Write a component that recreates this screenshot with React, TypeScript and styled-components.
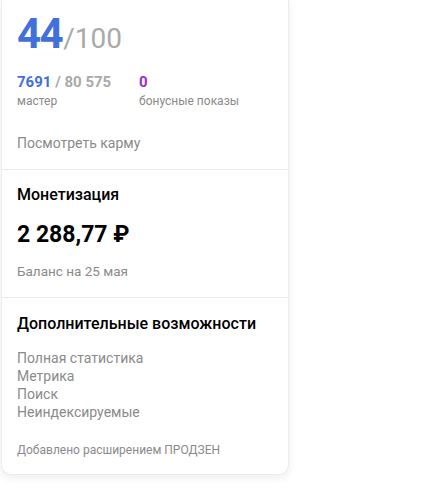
import React from "react";
import styled, { createGlobalStyle } from "styled-components";

const Global = createGlobalStyle`
  html, body { margin: 0; padding: 0; background: #ffffff; }
  body { font-family: Roboto, "Noto Sans", Arial, sans-serif; }
`;

const Page = styled.div`
  padding: 0 0 18px 1px;
  width: 422px;
  box-sizing: border-box;
`;

const Card = styled.div`
  width: 288px;
  background: #fff;
  border: 1px solid #ececec;
  border-top: none;
  border-radius: 0 0 10px 10px;
  box-shadow: 0 3px 8px rgba(0, 0, 0, 0.07);
  box-sizing: border-box;
`;

const Section = styled.section<{ $top: number; $bottom: number }>`
  padding: ${(p) => p.$top}px 16px ${(p) => p.$bottom}px 15px;
  border-bottom: 1px solid #e8e8e8;
  &:last-child { border-bottom: none; }
`;

const Score = styled.div`
  display: flex;
  align-items: baseline;
  line-height: 40px;
  height: 40px;
`;

const ScoreValue = styled.span`
  font-size: 42px;
  font-weight: 700;
  color: #4170da;
  letter-spacing: -1.5px;
`;

const ScoreTotal = styled.span`
  font-size: 28px;
  font-weight: 400;
  color: #a9a9a9;
  margin-left: 1px;
`;

const Stats = styled.div`
  display: grid;
  grid-template-columns: 122px auto;
  margin-top: 19px;
`;

const Stat = styled.div`
  display: flex;
  flex-direction: column;
`;

const StatValue = styled.div`
  font-size: 15px;
  line-height: 18px;
  font-weight: 700;
  color: #a9a9a9;
`;

const Accent = styled.span<{ $color: string }>`
  color: ${(p) => p.$color};
`;

const StatLabel = styled.div`
  font-size: 12px;
  line-height: 16px;
  color: #8a8a8a;
  margin-top: 2px;
`;

const Muted = styled.div<{ $size?: number; $mt?: number; $lh?: number }>`
  font-size: ${(p) => p.$size ?? 13}px;
  line-height: ${(p) => p.$lh ?? 18}px;
  color: #8a8a8a;
  margin-top: ${(p) => p.$mt ?? 0}px;
`;

const Title = styled.div<{ $size: number }>`
  font-size: ${(p) => p.$size}px;
  line-height: 20px;
  font-weight: 500;
  color: #000;
  white-space: nowrap;
`;

const Amount = styled.div`
  font-size: 23px;
  line-height: 28px;
  font-weight: 700;
  color: #000;
  margin-top: 16px;
`;

const List = styled.ul`
  list-style: none;
  margin: 15px 0 0;
  padding: 0;
`;

const Item = styled.li`
  font-size: 14px;
  line-height: 18px;
  color: #8a8a8a;
`;

export default function App() {
  return (
    <Page>
      <Global />
      <Card>
        <Section $top={14} $bottom={17}>
          <Score>
            <ScoreValue>44</ScoreValue>
            <ScoreTotal>/100</ScoreTotal>
          </Score>
          <Stats>
            <Stat>
              <StatValue>
                <Accent $color="#4170da">7691</Accent> / 80 575
              </StatValue>
              <StatLabel>мастер</StatLabel>
            </Stat>
            <Stat>
              <StatValue>
                <Accent $color="#9b2bd0">0</Accent>
              </StatValue>
              <StatLabel>бонусные показы</StatLabel>
            </Stat>
          </Stats>
          <Muted $size={14} $mt={25}>Посмотреть карму</Muted>
        </Section>
        <Section $top={15} $bottom={17}>
          <Title $size={16}>Монетизация</Title>
          <Amount>2 288,77 ₽</Amount>
          <Muted $size={13.5} $mt={13}>Баланс на 25 мая</Muted>
        </Section>
        <Section $top={16} $bottom={16}>
          <Title $size={16}>Дополнительные возможности</Title>
          <List>
            <Item>Полная статистика</Item>
            <Item>Метрика</Item>
            <Item>Поиск</Item>
            <Item>Неиндексируемые</Item>
          </List>
          <Muted $size={12} $lh={16} $mt={21}>Добавлено расширением ПРОДЗЕН</Muted>
        </Section>
      </Card>
    </Page>
  );
}
